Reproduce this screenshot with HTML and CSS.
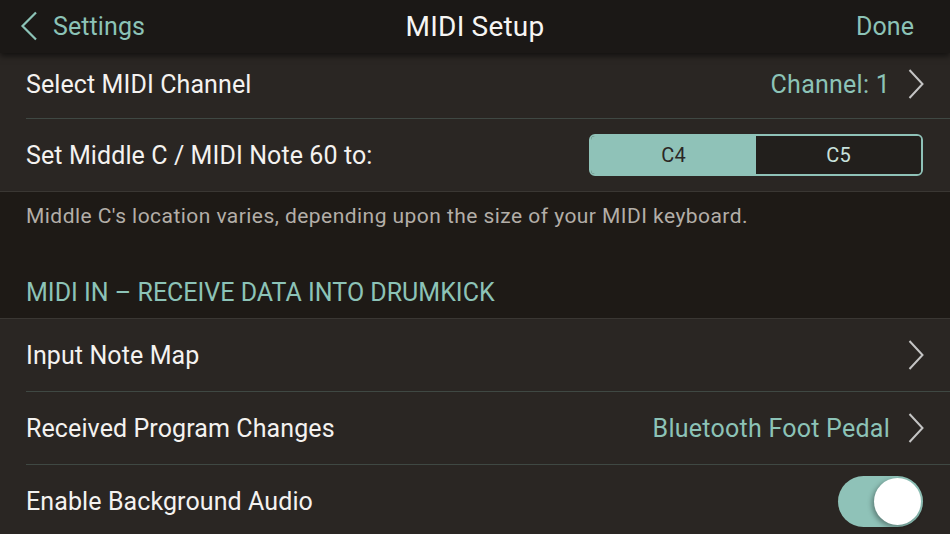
FILE: index.html
```html
<!DOCTYPE html>
<html lang="en">
<head>
<meta charset="utf-8">
<title>MIDI Setup</title>
<link rel="stylesheet" href="styles.css">
</head>
<body>
<div class="screen">
  <header class="navbar">
    <div class="nav-left">
      <svg class="back-chevron" width="18" height="30" viewBox="0 0 18 30"><path d="M16 1.5 L2.5 15 L16 28.5" fill="none" stroke="#8cc3b7" stroke-width="2.2"/></svg>
      <span class="nav-link">Settings</span>
    </div>
    <div class="nav-title">MIDI Setup</div>
    <div class="nav-right"><span class="nav-link nav-done">Done</span></div>
  </header>

  <section class="group">
    <div class="row row-first">
      <span class="label">Select MIDI Channel</span>
      <span class="detail">Channel: 1</span>
      <svg class="chevron" width="16" height="30" viewBox="0 0 16 30"><path d="M1.5 1 L14.5 15 L1.5 29" fill="none" stroke="#c4c4c4" stroke-width="2"/></svg>
    </div>
    <div class="sep"></div>
    <div class="row">
      <span class="label">Set Middle C / MIDI Note 60 to:</span>
      <div class="segmented">
        <span class="seg seg-on">C4</span>
        <span class="seg">C5</span>
      </div>
    </div>
  </section>
  <div class="sep-full"></div>

  <div class="footer-area">
    <p class="note">Middle C's location varies, depending upon the size of your MIDI keyboard.</p>
    <h2 class="section-title">MIDI IN – RECEIVE DATA INTO DRUMKICK</h2>
  </div>
  <div class="sep-full"></div>

  <section class="group">
    <div class="row">
      <span class="label">Input Note Map</span>
      <svg class="chevron" width="16" height="30" viewBox="0 0 16 30"><path d="M1.5 1 L14.5 15 L1.5 29" fill="none" stroke="#c4c4c4" stroke-width="2"/></svg>
    </div>
    <div class="sep"></div>
    <div class="row">
      <span class="label">Received Program Changes</span>
      <span class="detail">Bluetooth Foot Pedal</span>
      <svg class="chevron" width="16" height="30" viewBox="0 0 16 30"><path d="M1.5 1 L14.5 15 L1.5 29" fill="none" stroke="#c4c4c4" stroke-width="2"/></svg>
    </div>
    <div class="sep"></div>
    <div class="row">
      <span class="label">Enable Background Audio</span>
      <div class="toggle"><span class="knob"></span></div>
    </div>
  </section>
</div>
</body>
</html>
```

FILE: styles.css
```css
* { box-sizing: border-box; }
html, body { margin: 0; padding: 0; }
body {
  width: 950px;
  height: 534px;
  overflow: hidden;
  background: #2a2623;
  font-family: Roboto, "Liberation Sans", sans-serif;
  color: #f2f0ee;
}
.screen {
  width: 950px;
  height: 534px;
  display: flex;
  flex-direction: column;
  overflow: hidden;
}
.screen > * { flex-shrink: 0; }
.navbar {
  position: relative;
  z-index: 2;
  height: 53px;
  background: #1b1816;
  display: flex;
  align-items: center;
  padding: 0 20px;
  box-shadow: 0 3px 6px rgba(0,0,0,0.55);
}
.nav-left { display: flex; align-items: center; gap: 15px; flex: 1 1 0; }
.back-chevron { display: block; margin-top: -2px; }
.nav-link { color: #8cc3b7; font-size: 25px; letter-spacing: 0.1px; }
.nav-done { margin-right: 16px; }
.nav-title { font-size: 28px; color: #f6f5f3; letter-spacing: 0.2px; }
.nav-right { flex: 1 1 0; display: flex; justify-content: flex-end; }

.group { background: #2a2623; }
.row {
  height: 72px;
  display: flex;
  align-items: center;
  padding: 0 26px;
}
.row-first { height: 65px; padding-bottom: 3px; }
.label { font-size: 25px; flex: 1; letter-spacing: 0.1px; color: #f4f2f0; }
.detail { color: #8cc3b7; font-size: 25px; letter-spacing: 0.25px; margin-right: 18px; }
.chevron { display: block; }
.sep { height: 1px; margin-left: 26px; background: #3f4843; }
.sep-full { height: 1px; background: #3a3733; }

.segmented {
  width: 334px;
  height: 42px;
  border: 2px solid #8fc2b8;
  border-radius: 6px;
  display: flex;
  overflow: hidden;
  margin-right: 1px;
}
.seg {
  flex: 1;
  display: flex;
  align-items: center;
  justify-content: center;
  font-size: 20px;
  color: #c9e2dc;
  background: #221f1c;
}
.seg-on { background: #8fc2b8; color: #2b2724; }

.footer-area {
  background: #1e1a16;
  height: 126px;
  padding: 0 26px;
  display: flex;
  flex-direction: column;
}
.note {
  margin: 12px 0 0;
  font-size: 21px;
  color: #b3aea8;
  letter-spacing: 0.45px;
}
.section-title {
  margin: auto 0 11px;
  font-weight: 400;
  font-size: 25px;
  color: #8cc3b7;
  letter-spacing: 0;
}

.toggle {
  width: 85px;
  height: 51px;
  border-radius: 26px;
  background: #8fc2b8;
  position: relative;
  margin-right: 1px;
}
.knob {
  position: absolute;
  right: 2px;
  top: 2px;
  width: 47px;
  height: 47px;
  border-radius: 50%;
  background: #ffffff;
  box-shadow: -2px 2px 5px rgba(0,0,0,0.35);
}
```
